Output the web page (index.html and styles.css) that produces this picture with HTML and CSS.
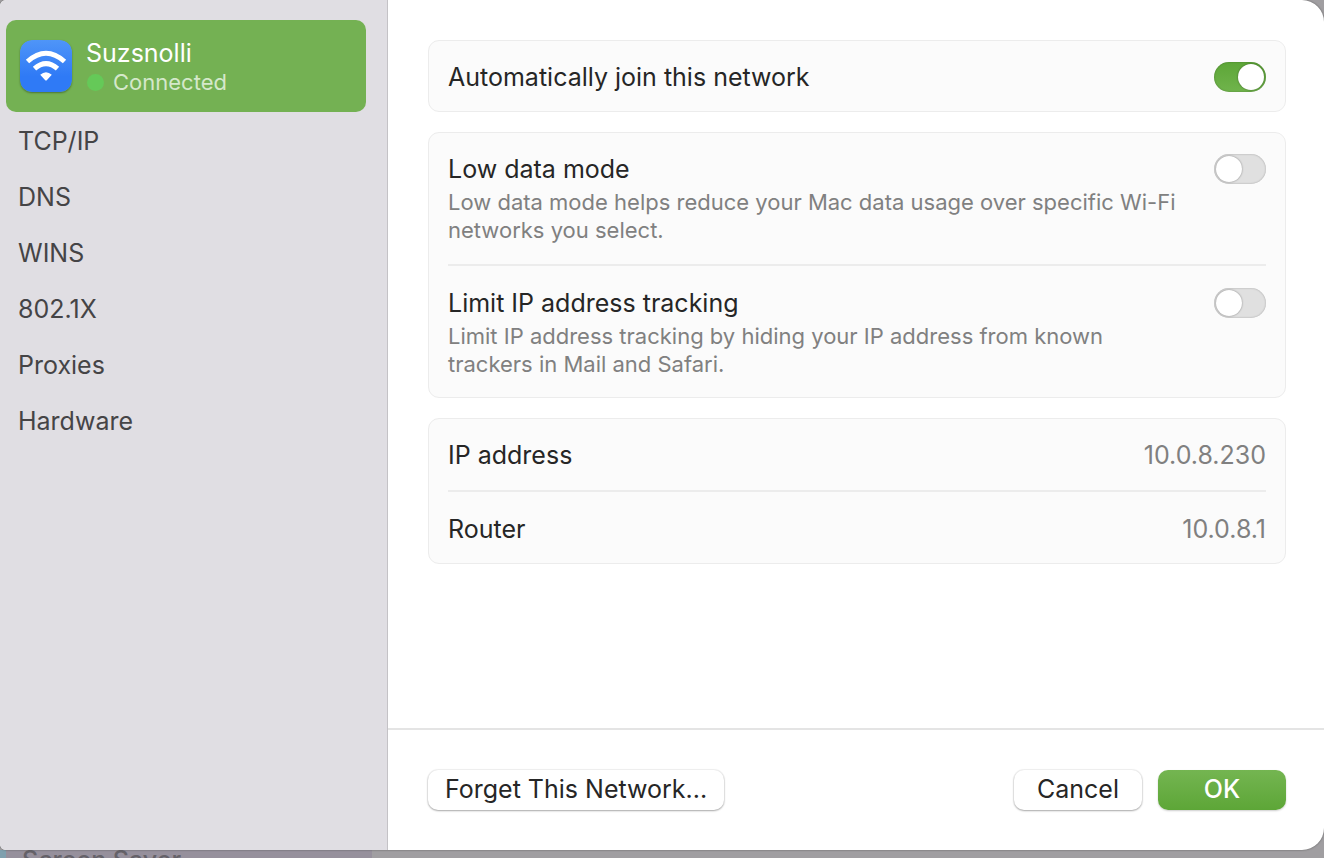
FILE: index.html
```html
<!DOCTYPE html>
<html lang="en">
<head>
	<meta charset="utf-8">
	<meta name="viewport" content="width=device-width, initial-scale=1">
	<title>Wi-Fi Details</title>
	<link rel="stylesheet" href="styles.css">
</head>
<body>
<div class="dialog">
	<nav class="sidebar">
		<a class="network" href="#wifi">
			<svg class="wifi-icon" viewBox="0 0 52 52" aria-hidden="true">
				<defs>
					<linearGradient id="blue" x1="0" y1="0" x2="0" y2="1">
						<stop offset="0" stop-color="#4f95f8"/>
						<stop offset="0.7" stop-color="#2f7af6"/>
						<stop offset="1" stop-color="#2f7af6"/>
					</linearGradient>
				</defs>
				<rect width="52" height="52" rx="12" fill="url(#blue)"/>
				<path d="M7.5 21.5Q26 5 44.5 21.5" fill="none" stroke="#fff" stroke-width="5"/>
				<path d="M14.5 28.7Q26 18.5 37.5 28.7" fill="none" stroke="#fff" stroke-width="5"/>
				<path d="M20.2 34.8Q26 29.6 31.8 34.8L27 39.9Q26 41 25 39.9Z" fill="#fff"/>
			</svg>
			<span class="network-text">
				<span class="network-name">Suzsnolli</span>
				<span class="status">Connected</span>
			</span>
		</a>
		<a class="tab" href="#tcpip">TCP/IP</a>
		<a class="tab" href="#dns">DNS</a>
		<a class="tab" href="#wins">WINS</a>
		<a class="tab" href="#8021x">802.1X</a>
		<a class="tab" href="#proxies">Proxies</a>
		<a class="tab" href="#hardware">Hardware</a>
	</nav>
	<div class="content">
		<main class="settings">
			<section class="card">
				<div class="row">
					<label class="title" for="autojoin">Automatically join this network</label>
					<input class="toggle" type="checkbox" id="autojoin" checked>
				</div>
			</section>
			<section class="card">
				<div class="row">
					<div class="row-text">
						<label class="title" for="lowdata">Low data mode</label>
						<p class="note" id="lowdata-note">Low data mode helps reduce your Mac data usage over specific Wi-Fi networks you select.</p>
					</div>
					<input class="toggle" type="checkbox" id="lowdata" aria-describedby="lowdata-note">
				</div>
				<div class="row">
					<div class="row-text">
						<label class="title" for="limitip">Limit IP address tracking</label>
						<p class="note" id="limitip-note">Limit IP address tracking by hiding your IP address from known trackers in Mail and Safari.</p>
					</div>
					<input class="toggle" type="checkbox" id="limitip" aria-describedby="limitip-note">
				</div>
			</section>
			<dl class="card">
				<div class="row">
					<dt class="title">IP address</dt>
					<dd class="value">10.0.8.230</dd>
				</div>
				<div class="row">
					<dt class="title">Router</dt>
					<dd class="value">10.0.8.1</dd>
				</div>
			</dl>
		</main>
		<footer class="actions">
			<button class="btn forget" type="button">Forget This Network...</button>
			<button class="btn" type="button">Cancel</button>
			<button class="btn primary" type="button">OK</button>
		</footer>
	</div>
</div>
<!-- dimmed settings window under the dialog -->
<div class="behind">
	<div class="behind-list">Screen Saver</div>
</div>
</body>
</html>
```
FILE: styles.css
```css
*
{
	box-sizing: border-box;
}
body
{
	margin: 0;
	min-height: 100vh;
	display: grid;
	grid-template-rows: 1fr 8px;
	background-color: #a09ea1;
	color: #262626;
	font-family: Inter, "Liberation Sans", sans-serif;
	font-size: 25px;
	line-height: 30px;
}
.dialog
{
	display: grid;
	grid-template-columns: 388px 1fr;
	border-radius: 6px 22px 22px 6px;
	background-color: white;
	box-shadow: 0 0 2px #555;
	overflow: hidden;
	z-index: 1;
}

/* sidebar */
.sidebar
{
	padding: 20px 21px 20px 6px;
	background-color: #e0dee3;
	border-right: 1px solid #c4c2c6;
}
.network
{
	display: flex;
	align-items: center;
	gap: 14px;
	height: 92px;
	padding: 0 14px;
	border-radius: 10px;
	background-color: #74b153;
	color: white;
	text-decoration: none;
}
.wifi-icon
{
	width: 52px;
	height: 52px;
	border-radius: 12px;
	box-shadow: 0 1px 2px rgba(0,0,0,0.35);
}
.network-text
{
	display: flex;
	flex-direction: column;
	padding-top: 2px;
}
.status
{
	display: flex;
	align-items: center;
	gap: 9px;
	color: #d5e8cb;
	font-size: 22px;
	line-height: 28px;
}
.status::before
{
	content: "";
	width: 17px;
	height: 17px;
	margin-left: 1px;
	border-radius: 50%;
	background-color: #65c958;
}
.tab
{
	display: block;
	padding: 14px 12px 12px;
	color: #454446;
	text-decoration: none;
}

/* settings */
.content
{
	display: flex;
	flex-direction: column;
}
.settings
{
	flex: 1;
	display: flex;
	flex-direction: column;
	gap: 20px;
	padding: 40px 38px 40px 40px;
}
.card
{
	margin: 0;
	padding: 0 19px;
	border: 1px solid #ececec;
	border-radius: 11px;
	background-color: #fbfbfb;
}
.row
{
	display: flex;
	justify-content: space-between;
	gap: 30px;
	padding: 21px 0 20px;
}
.row:only-child
{
	padding-bottom: 19px;
}
.row + .row
{
	padding: 22px 0 19px;
	border-top: 2px solid #ececec;
}
.note
{
	max-width: 740px;
	margin: 4px 0 0;
	color: #808080;
	font-size: 22px;
	line-height: 28px;
}
.value
{
	margin: 0;
	color: #808080;
}
.toggle
{
	appearance: none;
	flex: none;
	width: 52px;
	height: 30px;
	margin: 0;
	padding: 2px;
	border-radius: 15px;
	background-color: #e0e0e0;
	box-shadow: inset 0 0 2px rgba(0,0,0,0.3);
}
.toggle::before
{
	content: "";
	display: block;
	width: 26px;
	height: 26px;
	border-radius: 50%;
	background-color: white;
	box-shadow: 0 0 2px rgba(0,0,0,0.45);
}
.toggle:checked
{
	background: linear-gradient(#5da637, #70b44c);
}
.toggle:checked::before
{
	margin-left: auto;
}

/* buttons */
.actions
{
	display: flex;
	gap: 16px;
	padding: 40px 38px 40px 40px;
	border-top: 2px solid #e4e4e4;
}
.btn
{
	min-width: 128px;
	height: 40px;
	padding: 0 17px 2px;
	border: none;
	border-radius: 10px;
	background-color: white;
	box-shadow: 0 0 1px 1px rgba(0,0,0,0.06), 0 1px 2px rgba(0,0,0,0.3);
	color: #262626;
	font: inherit;
}
.forget
{
	margin-right: auto;
}
.primary
{
	background: linear-gradient(#74b551, #5da637);
	box-shadow: 0 1px 2px rgba(0,0,0,0.2);
	color: white;
	font-weight: 500;
}

.behind
{
	overflow: hidden;
}
.behind-list
{
	width: 372px;
	padding-left: 16px;
	border-left: 6px solid #7fa0ae;
	background-color: #96909c;
	color: #656269;
	font-weight: 500;
	line-height: 20px;
}
```
